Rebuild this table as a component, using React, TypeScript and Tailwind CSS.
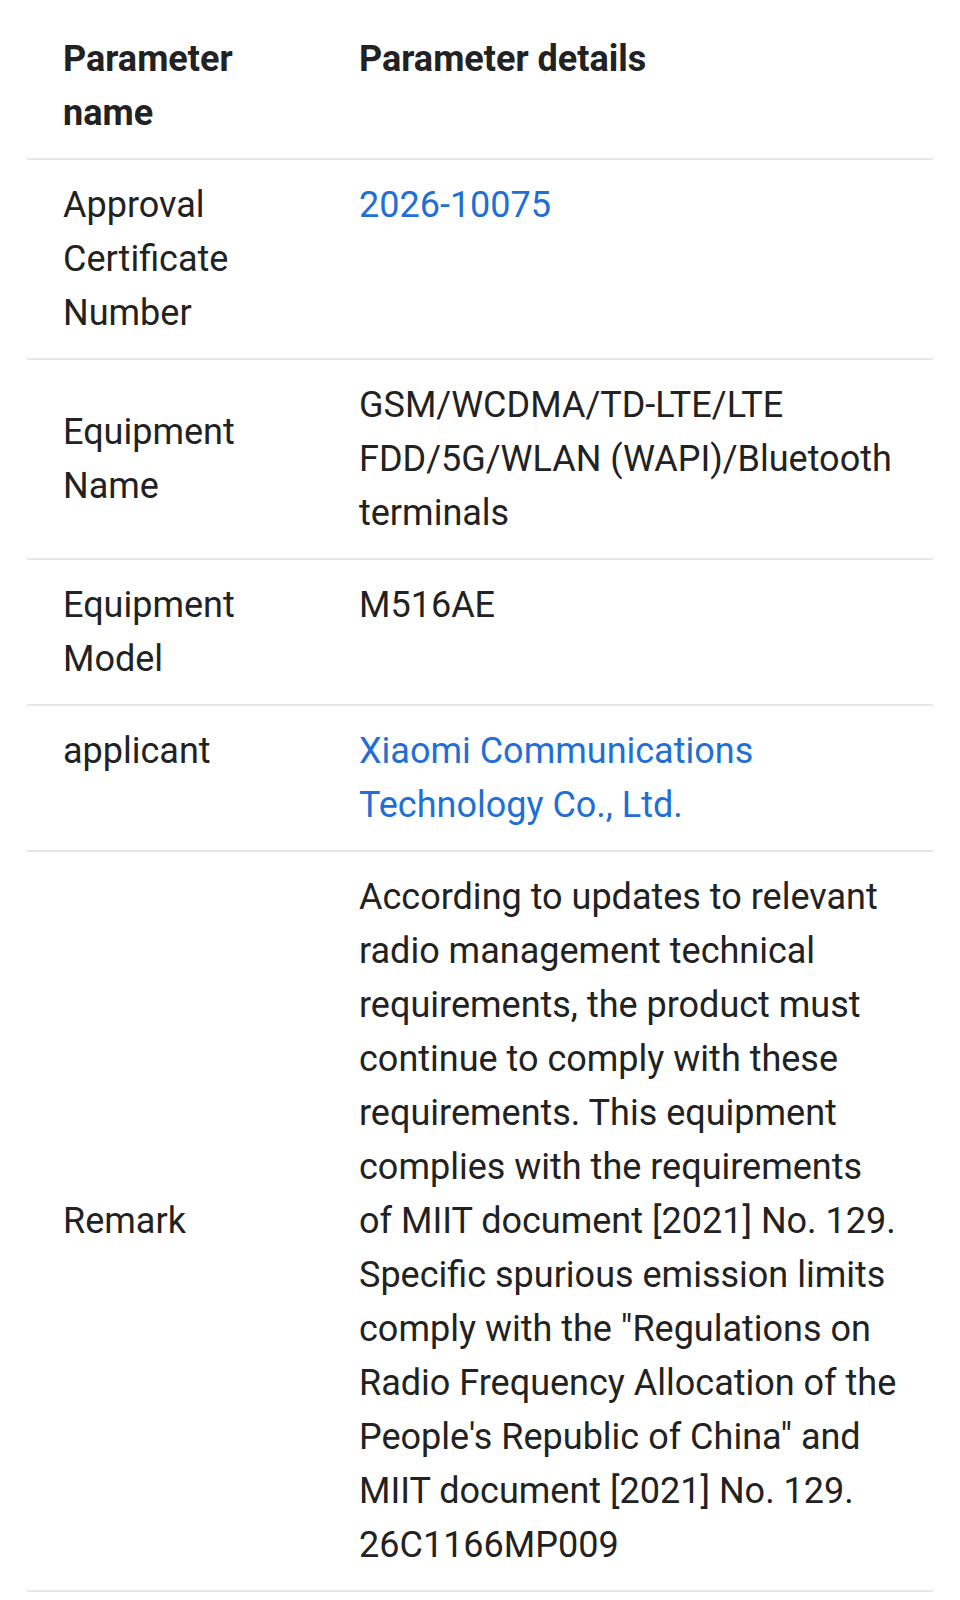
const rows: {
  label: string[]
  value: string[]
  link?: boolean
  labelAlign: "top" | "middle"
}[] = [
  {
    label: ["Approval", "Certificate", "Number"],
    value: ["2026-10075"],
    link: true,
    labelAlign: "top",
  },
  {
    label: ["Equipment", "Name"],
    value: ["GSM/WCDMA/TD-LTE/LTE", "FDD/5G/WLAN (WAPI)/Bluetooth", "terminals"],
    labelAlign: "middle",
  },
  {
    label: ["Equipment", "Model"],
    value: ["M516AE"],
    labelAlign: "top",
  },
  {
    label: ["applicant"],
    value: ["Xiaomi Communications", "Technology Co., Ltd."],
    link: true,
    labelAlign: "top",
  },
  {
    label: ["Remark"],
    value: [
      "According to updates to relevant",
      "radio management technical",
      "requirements, the product must",
      "continue to comply with these",
      "requirements. This equipment",
      "complies with the requirements",
      "of MIIT document [2021] No. 129.",
      "Specific spurious emission limits",
      'comply with the "Regulations on',
      "Radio Frequency Allocation of the",
      'People\'s Republic of China" and',
      "MIIT document [2021] No. 129.",
      "26C1166MP009",
    ],
    labelAlign: "middle",
  },
]

function Lines({ lines }: { lines: string[] }) {
  return (
    <>
      {lines.map((l, i) => (
        <div key={i} className="whitespace-nowrap">
          {l}
        </div>
      ))}
    </>
  )
}

export default function App() {
  return (
    <div className="min-h-screen bg-white pt-[14px] px-[27px] font-['Roboto',_'Liberation_Sans',_sans-serif] text-[36px] leading-[54px] text-[#222222]">
      {/* Header */}
      <div className="flex border-b-2 border-[#e6e6e6] py-[18px]">
        <div className="w-[332px] shrink-0 pl-[36px] font-bold">
          <Lines lines={["Parameter", "name"]} />
        </div>
        <div className="flex-1 font-bold">Parameter details</div>
      </div>

      {/* Rows */}
      {rows.map((row, i) => (
        <div key={i} className="flex border-b-2 border-[#e6e6e6] py-[18px]">
          <div
            className={
              row.labelAlign === "middle"
                ? "w-[332px] shrink-0 pl-[36px] self-center"
                : "w-[332px] shrink-0 pl-[36px] self-start"
            }
          >
            <Lines lines={row.label} />
          </div>
          <div className={row.link ? "flex-1 text-[#1f6fd6]" : "flex-1"}>
            <Lines lines={row.value} />
          </div>
        </div>
      ))}
    </div>
  )
}
